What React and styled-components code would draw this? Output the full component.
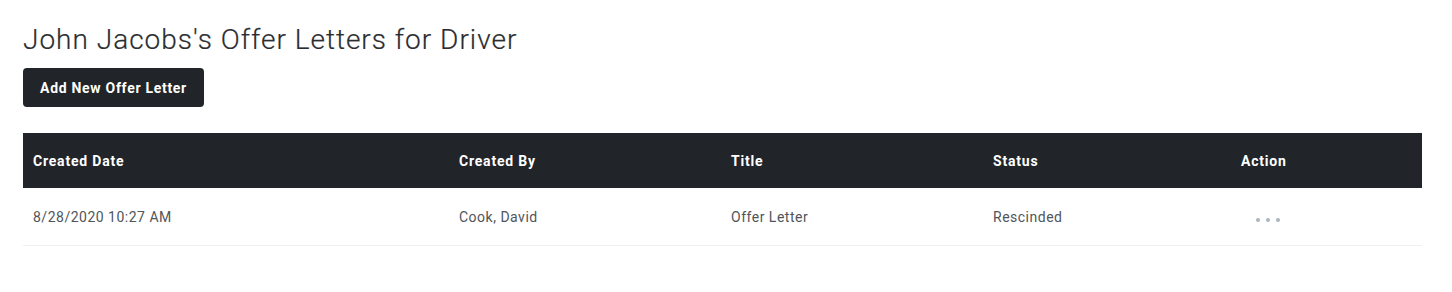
import React from "react";
import styled, { createGlobalStyle } from "styled-components";

const Global = createGlobalStyle`
  html, body { margin: 0; padding: 0; background: #fff; }
  body { font-family: Roboto, "Liberation Sans", sans-serif; color: #212529; }
`;

const Page = styled.div`
  padding: 24px 30px 0 23px;
  display: flex;
  flex-direction: column;
`;

const Title = styled.h1`
  margin: 0;
  font-size: 28px;
  font-weight: 300;
  line-height: 32px;
  color: #2b2d30;
  letter-spacing: 1px;
  -webkit-text-stroke: 0.2px #2b2d30;
`;

const AddButton = styled.button`
  align-self: flex-start;
  margin-top: 12px;
  width: 181px;
  height: 39px;
  border: none;
  border-radius: 4px;
  background: #212429;
  color: #fff;
  font-family: inherit;
  font-weight: 700;
  font-size: 14px;
  letter-spacing: 0.7px;
  cursor: pointer;
`;

const Table = styled.table`
  margin-top: 26px;
  width: 1399px;
  border-collapse: collapse;
  table-layout: fixed;
`;

const HeadCell = styled.th`
  box-sizing: border-box;
  background: #212429;
  color: #fff;
  text-align: left;
  font-size: 14px;
  font-weight: 700;
  letter-spacing: 0.8px;
  height: 55px;
  padding: 0 10px;
  width: ${(p) => p.$w}px;
`;

const Row = styled.tr`
  border-bottom: 1px solid #eff0f1;
`;

const Cell = styled.td`
  box-sizing: border-box;
  height: 57px;
  padding: 2px 10px 0;
  font-size: 14px;
  color: #50555a;
  letter-spacing: 0.5px;
`;

const Dots = styled.span`
  display: inline-flex;
  gap: 6px;
  margin-left: 15px;
  & > i {
    width: 4px;
    height: 4px;
    border-radius: 50%;
    background: #a9b5bc;
  }
`;

const cols = [
  ["Created Date", 426],
  ["Created By", 272],
  ["Title", 262],
  ["Status", 248],
  ["Action", 191],
];

export default function App() {
  return (
    <>
      <Global />
      <Page>
        <Title>John Jacobs's Offer Letters for Driver</Title>
        <AddButton>Add New Offer Letter</AddButton>
        <Table>
          <thead>
            <tr>
              {cols.map(([c, w]) => (
                <HeadCell key={c} $w={w}>{c}</HeadCell>
              ))}
            </tr>
          </thead>
          <tbody>
            <Row>
              <Cell>8/28/2020 10:27 AM</Cell>
              <Cell>Cook, David</Cell>
              <Cell>Offer Letter</Cell>
              <Cell>Rescinded</Cell>
              <Cell>
                <Dots><i /><i /><i /></Dots>
              </Cell>
            </Row>
          </tbody>
        </Table>
      </Page>
    </>
  );
}
